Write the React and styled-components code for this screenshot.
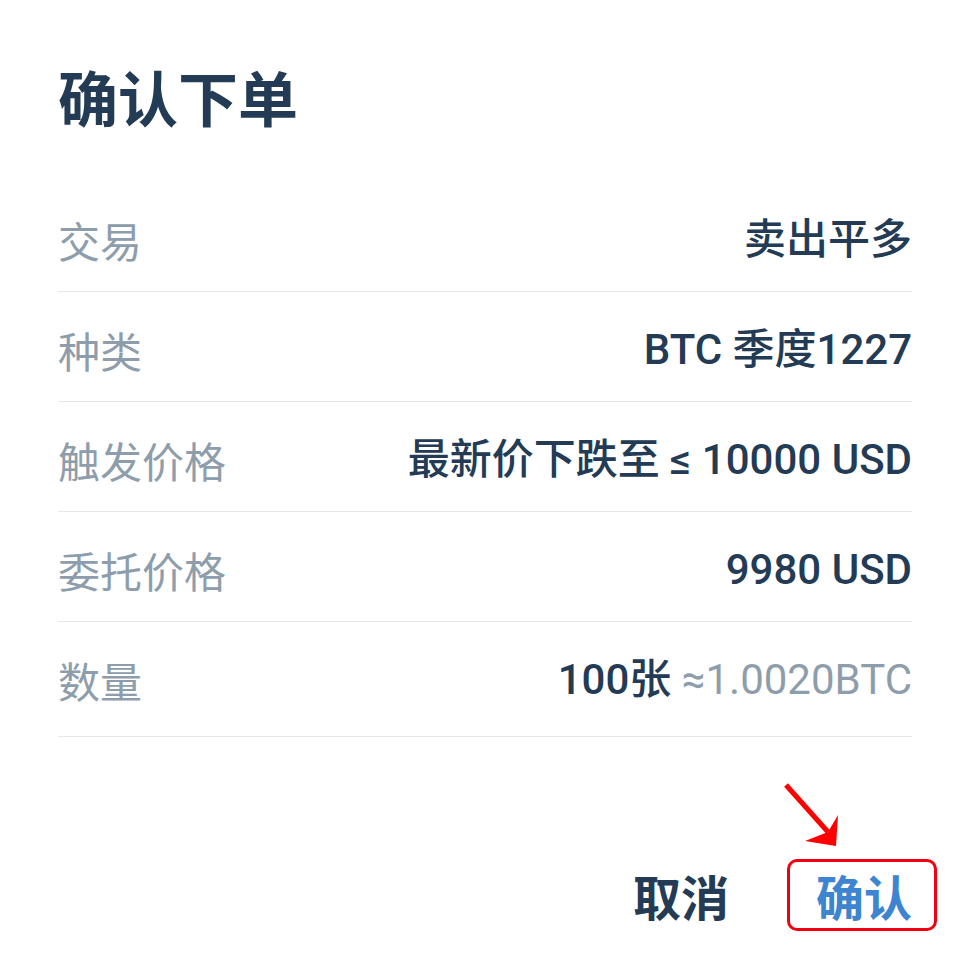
import React from "react";
import styled, { createGlobalStyle } from "styled-components";

const GlobalStyle = createGlobalStyle`
  body {
    margin: 0;
    background: #ffffff;
    font-family: Roboto, "Noto Sans CJK SC", sans-serif;
  }
`;

const Sheet = styled.div`
  width: 970px;
  min-height: 972px;
  box-sizing: border-box;
  padding: 66px 58px 0 58px;
  background: #ffffff;
`;

const Title = styled.h1`
  margin: 0 0 56px 0;
  font-size: 60px;
  line-height: 60px;
  font-weight: 700;
  color: #243b55;
  font-family: "Noto Sans CJK SC", sans-serif;
`;

const List = styled.div`
  display: flex;
  flex-direction: column;
`;

const Row = styled.div`
  display: flex;
  justify-content: space-between;
  align-items: center;
  padding: ${({ $tall }) => ($tall ? "37px 0 35px" : "37px 0 30px")};
  line-height: 42px;
  border-bottom: 1px solid #e6e8eb;
`;

const Label = styled.span`
  font-size: 42px;
  color: #8e9dab;
  font-family: "Noto Sans CJK SC", sans-serif;
`;

const Value = styled.span`
  font-size: 42px;
  font-weight: 500;
  color: #243b55;
  font-family: Roboto, "Noto Sans CJK SC", sans-serif;
  white-space: nowrap;
`;

const Muted = styled.span`
  font-weight: 400;
  color: #8e9dab;
`;

const Footer = styled.div`
  display: flex;
  justify-content: flex-end;
  align-items: center;
  gap: 33px;
  margin-top: 122px;
  margin-right: -25px;
`;

const Action = styled.button`
  position: relative;
  height: 72px;
  padding: 0 22px 0 26px;
  border: 3px solid ${({ $highlight }) => ($highlight ? "#f00012" : "transparent")};
  border-radius: 10px;
  background: transparent;
  font-family: "Noto Sans CJK SC", sans-serif;
  font-size: 48px;
  font-weight: 700;
  line-height: 1;
  color: ${({ $primary }) => ($primary ? "#3d84d1" : "#243b55")};
  cursor: pointer;
`;

const Pointer = styled.svg`
  position: absolute;
  left: -12px;
  top: -85px;
  width: 70px;
  height: 75px;
  overflow: visible;
`;

const rows = [
  { label: "交易", value: "卖出平多" },
  { label: "种类", value: "BTC 季度1227" },
  { label: "触发价格", value: "最新价下跌至 ≤ 10000 USD" },
  { label: "委托价格", value: "9980 USD" },
];

export default function App() {
  return (
    <>
      <GlobalStyle />
      <Sheet>
        <Title>确认下单</Title>
        <List>
          {rows.map((r) => (
            <Row key={r.label}>
              <Label>{r.label}</Label>
              <Value>{r.value}</Value>
            </Row>
          ))}
          <Row $tall>
            <Label>数量</Label>
            <Value>
              100张 <Muted>≈1.0020BTC</Muted>
            </Value>
          </Row>
        </List>
        <Footer>
          <Action>取消</Action>
          <Action $primary $highlight>
            确认
            <Pointer viewBox="0 0 70 75">
              <line x1="8" y1="8" x2="50" y2="55" stroke="#ff0000" strokeWidth="5" />
              <path d="M27 64 L58 69 L60 38 L50 55 Z" fill="#ff0000" />
            </Pointer>
          </Action>
        </Footer>
      </Sheet>
    </>
  );
}
